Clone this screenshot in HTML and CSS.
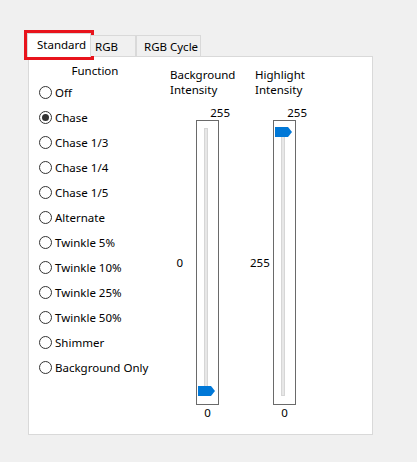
FILE: index.html
```html
<!DOCTYPE html>
<html>
<head>
<meta charset="utf-8">
<link rel="stylesheet" href="styles.css">
</head>
<body>
<div class="window">
  <div class="tabs">
    <div class="tab tab-selected">Standard</div>
    <div class="tab tab-rgb">RGB</div>
    <div class="tab tab-cycle">RGB Cycle</div>
  </div>
  <div class="panel">
    <div class="function">
      <div class="function-title">Function</div>
      <div class="radio-row"><span class="radio"></span><span>Off</span></div>
      <div class="radio-row"><span class="radio checked"></span><span>Chase</span></div>
      <div class="radio-row"><span class="radio"></span><span>Chase 1/3</span></div>
      <div class="radio-row"><span class="radio"></span><span>Chase 1/4</span></div>
      <div class="radio-row"><span class="radio"></span><span>Chase 1/5</span></div>
      <div class="radio-row"><span class="radio"></span><span>Alternate</span></div>
      <div class="radio-row"><span class="radio"></span><span>Twinkle 5%</span></div>
      <div class="radio-row"><span class="radio"></span><span>Twinkle 10%</span></div>
      <div class="radio-row"><span class="radio"></span><span>Twinkle 25%</span></div>
      <div class="radio-row"><span class="radio"></span><span>Twinkle 50%</span></div>
      <div class="radio-row"><span class="radio"></span><span>Shimmer</span></div>
      <div class="radio-row"><span class="radio"></span><span>Background Only</span></div>
    </div>
    <div class="slider-col slider-bg">
      <div class="slider-title">Background<br>Intensity</div>
      <div class="slider">
        <div class="value">0</div>
        <div class="track-col">
          <div class="top-label">255</div>
          <div class="box">
            <div class="track"></div>
            <svg class="thumb thumb-min" width="17" height="10" viewBox="0 0 17 10"><polygon points="0,0 13,0 17,5 13,10 0,10" fill="#0078d7"/></svg>
          </div>
          <div class="bottom-label">0</div>
        </div>
      </div>
    </div>
    <div class="slider-col slider-hl">
      <div class="slider-title">Highlight<br>Intensity</div>
      <div class="slider">
        <div class="value">255</div>
        <div class="track-col">
          <div class="top-label">255</div>
          <div class="box">
            <div class="track"></div>
            <svg class="thumb thumb-max" width="17" height="10" viewBox="0 0 17 10"><polygon points="0,0 13,0 17,5 13,10 0,10" fill="#0078d7"/></svg>
          </div>
          <div class="bottom-label">0</div>
        </div>
      </div>
    </div>
  </div>
</div>
</body>
</html>
```
FILE: styles.css
```css
html, body {
  margin: 0;
  padding: 0;
  background: #f0f0f0;
}
body {
  width: 417px;
  height: 462px;
  font-family: "Noto Sans", "Open Sans", sans-serif;
  font-size: 11.5px;
  color: #000;
}
.window {
  padding: 33px 0 0 27px;
}
.tabs {
  display: flex;
  align-items: flex-end;
  height: 23px;
  position: relative;
  z-index: 2;
}
.tab {
  box-sizing: border-box;
  border: 1px solid #d9d9d9;
  border-bottom: none;
  background: #f0f0f0;
  line-height: 18px;
  height: 21px;
  white-space: nowrap;
}
.tab-selected {
  width: 64px;
  height: 24px;
  margin-bottom: -1px;
  background: #fff;
  padding: 2px 0 0 9px;
  outline: 3px solid #e8141c;
}
.tab-rgb {
  width: 45px;
  border-left: none;
  padding-left: 4px;
  padding-top: 2px;
}
.tab-cycle {
  width: 65px;
  border-left: 1px solid #d9d9d9;
  padding-left: 7px;
  padding-top: 2px;
}
.panel {
  box-sizing: border-box;
  margin-left: 1px;
  width: 345px;
  height: 379px;
  background: #fff;
  border: 1px solid #d9d9d9;
  display: flex;
  align-items: flex-start;
}
.function {
  box-sizing: border-box;
  width: 141px;
  padding: 6px 0 0 10px;
}
.function-title {
  width: 112px;
  text-align: center;
  line-height: 15px;
  margin-bottom: 2px;
}
.radio-row {
  display: flex;
  align-items: center;
  height: 25px;
  white-space: nowrap;
}
.radio {
  box-sizing: border-box;
  width: 13px;
  height: 13px;
  border: 1px solid #333;
  border-radius: 50%;
  margin-right: 3px;
  display: flex;
  align-items: center;
  justify-content: center;
  flex: none;
}
.radio.checked::after {
  content: "";
  width: 7px;
  height: 7px;
  border-radius: 50%;
  background: #333;
}
.slider-col {
  margin-top: 10px;
}
.slider-bg {
  width: 85px;
}
.slider-title {
  line-height: 15px;
  margin-bottom: 8px;
  white-space: nowrap;
}
.slider {
  display: flex;
  align-items: center;
}
.value {
  box-sizing: border-box;
  text-align: right;
  line-height: 15px;
}
.slider-bg .value {
  width: 26px;
  padding-right: 13px;
}
.slider-hl .slider {
  margin-left: -5px;
}
.slider-hl .value {
  width: 23px;
  padding-right: 5px;
}
.track-col {
  width: 23px;
  display: flex;
  flex-direction: column;
}
.top-label {
  line-height: 15px;
  text-align: right;
  margin-right: -11px;
}
.bottom-label {
  line-height: 15px;
  text-align: center;
}
.box {
  box-sizing: border-box;
  position: relative;
  width: 23px;
  height: 285px;
  border: 1px solid #6a6a6a;
  padding: 7px 0 8px 7px;
}
.track {
  box-sizing: border-box;
  width: 4px;
  height: 100%;
  background: #e7e7e7;
  border: 1px solid #d6d6d6;
}
.thumb {
  position: absolute;
  left: 1px;
  display: block;
}
.thumb-min {
  top: 265px;
}
.thumb-max {
  top: 6px;
}
```
